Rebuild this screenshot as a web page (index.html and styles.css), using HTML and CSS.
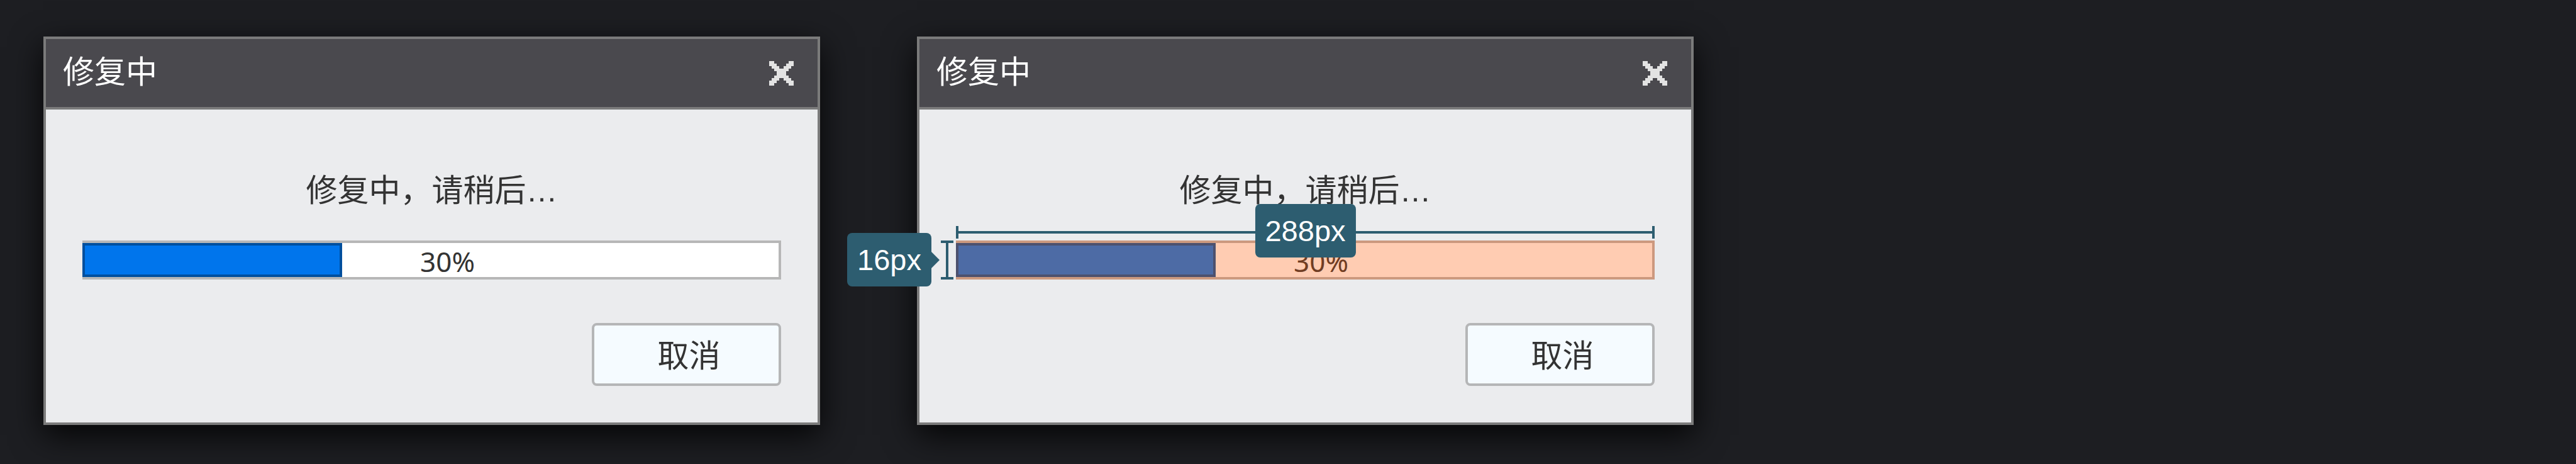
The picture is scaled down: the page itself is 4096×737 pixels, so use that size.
FILE: index.html
```html
<!DOCTYPE html>
<html lang="zh-CN">
<head>
<meta charset="utf-8">
<title>修复中</title>
<link rel="stylesheet" href="styles.css">
</head>
<body>
<main class="board">
  <section class="dialog" role="dialog" aria-labelledby="title-a">
    <header class="dialog-header">
      <h2 class="dialog-title" id="title-a">修复中</h2>
      <button class="close" type="button" aria-label="关闭">
        <svg class="close-icon" viewBox="0 0 10 10" shape-rendering="crispEdges" aria-hidden="true"><path d="M0 0h2v1h1v1h1v1h2v-1h1v-1h1v-1h2v2h-1v1h-1v1h-1v2h1v1h1v1h1v2h-2v-1h-1v-1h-1v-1h-2v1h-1v1h-1v1h-2v-2h1v-1h1v-1h1v-2h-1v-1h-1v-1h-1z"/></svg>
      </button>
    </header>
    <div class="dialog-body">
      <p class="message">修复中，请稍后<span class="dots">…</span></p>
      <div class="progress" role="progressbar" aria-valuenow="30" aria-valuemin="0" aria-valuemax="100" aria-label="修复进度">
        <div class="progress-fill"></div>
        <span class="progress-text">30%</span>
      </div>
      <div class="actions"><button class="cancel" type="button">取消</button></div>
    </div>
  </section>

  <section class="dialog" role="dialog" aria-labelledby="title-b">
    <header class="dialog-header">
      <h2 class="dialog-title" id="title-b">修复中</h2>
      <button class="close" type="button" aria-label="关闭">
        <svg class="close-icon" viewBox="0 0 10 10" shape-rendering="crispEdges" aria-hidden="true"><path d="M0 0h2v1h1v1h1v1h2v-1h1v-1h1v-1h2v2h-1v1h-1v1h-1v2h1v1h1v1h1v2h-2v-1h-1v-1h-1v-1h-2v1h-1v1h-1v1h-2v-2h1v-1h1v-1h1v-2h-1v-1h-1v-1h-1z"/></svg>
      </button>
    </header>
    <div class="dialog-body">
      <p class="message">修复中，请稍后<span class="dots">…</span></p>
      <div class="measured">
        <div class="progress" role="progressbar" aria-valuenow="30" aria-valuemin="0" aria-valuemax="100" aria-label="修复进度">
          <div class="progress-fill"></div>
          <span class="progress-text">30%</span>
        </div>
        <div class="highlight"></div>
        <div class="ruler-x"></div>
        <div class="ruler-y"></div>
        <span class="size size-x">288px</span>
        <span class="size size-y">16px</span>
      </div>
      <div class="actions"><button class="cancel" type="button">取消</button></div>
    </div>
  </section>
</main>
</body>
</html>
```
FILE: styles.css
```css
* { box-sizing: border-box; }

body {
  margin: 0;
  background: #1d1e22;
  color: #333;
  font-family: "Noto Sans CJK SC", sans-serif;
  font-size: 50px;
  line-height: 60px;
}

.board {
  display: flex;
  align-items: flex-start;
  gap: 154px;
  min-height: 100vh;
  padding: 58px 69px;
}

.dialog {
  width: 1235px;
  flex: none;
  border: 4px solid #7b7b7b;
  background: #ebecee;
  box-shadow: 0 16px 48px rgba(0, 0, 0, 0.85);
}

.dialog-header {
  display: flex;
  align-items: center;
  justify-content: space-between;
  height: 112px;
  padding: 0 38px 0 27px;
  border-bottom: 4px solid #7b7b7b;
  background: #4a494e;
}

.dialog-title {
  margin: 0;
  padding-bottom: 12px;
  color: #fff;
  font-size: 50px;
  font-weight: 400;
}

.close {
  display: flex;
  padding: 0;
  border: 0;
  background: none;
}

.close-icon {
  width: 39px;
  height: 39px;
  fill: #e3e3e3;
}

.dialog-body { padding: 94px 58px 58px; }

.message {
  margin: 0 0 54px;
  text-align: center;
}

.dots {
  font-family: "Liberation Sans", Arial, sans-serif;
  line-height: 0;
}

.measured { position: relative; }

.progress {
  position: relative;
  height: 62px;
  border: 4px solid #b7b7b7;
  border-left: 0;
  background: #fff;
}

.progress-fill {
  width: 413px;
  height: 100%;
  border: 4px solid #004f9e;
  background: #0075ec;
}

.progress-text {
  position: absolute;
  inset: 0;
  padding: 2px 0 0 54px;
  font-family: "Noto Sans", sans-serif;
  font-size: 44px;
  line-height: 54px;
  text-align: center;
}

.actions {
  display: flex;
  justify-content: flex-end;
  margin-top: 69px;
}

.cancel {
  width: 301px;
  height: 100px;
  padding: 0 0 4px 8px;
  border: 4px solid #b5b6b7;
  border-radius: 8px;
  background: #f5fbff;
  color: #333;
  font: inherit;
}

.highlight {
  position: absolute;
  inset: 0;
  background: rgba(255, 85, 0, 0.3);
}

.ruler-x,
.ruler-y {
  position: absolute;
  background: linear-gradient(#2d5d70, #2d5d70) center no-repeat;
}

.ruler-x {
  top: -23px;
  left: 0;
  right: 0;
  height: 20px;
  border: solid #2d5d70;
  border-width: 0 4px;
  background-size: 100% 4px;
}

.ruler-y {
  top: 0;
  bottom: 0;
  left: -24px;
  width: 20px;
  border: solid #2d5d70;
  border-width: 4px 0;
  background-size: 4px 100%;
}

.size {
  position: absolute;
  padding: 0 16px;
  border-radius: 8px;
  background: #2d5d70;
  color: #fff;
  font-family: "Liberation Sans", Arial, sans-serif;
  font-size: 47px;
  line-height: 85px;
}

.size-x {
  top: -58px;
  left: 50%;
  transform: translateX(-50%);
}

.size-y {
  top: -12px;
  right: calc(100% + 39px);
}

.size-y::after {
  content: "";
  position: absolute;
  top: 50%;
  left: 100%;
  margin-top: -13px;
  border: solid transparent;
  border-width: 13px 0 13px 13px;
  border-left-color: #2d5d70;
}
```
